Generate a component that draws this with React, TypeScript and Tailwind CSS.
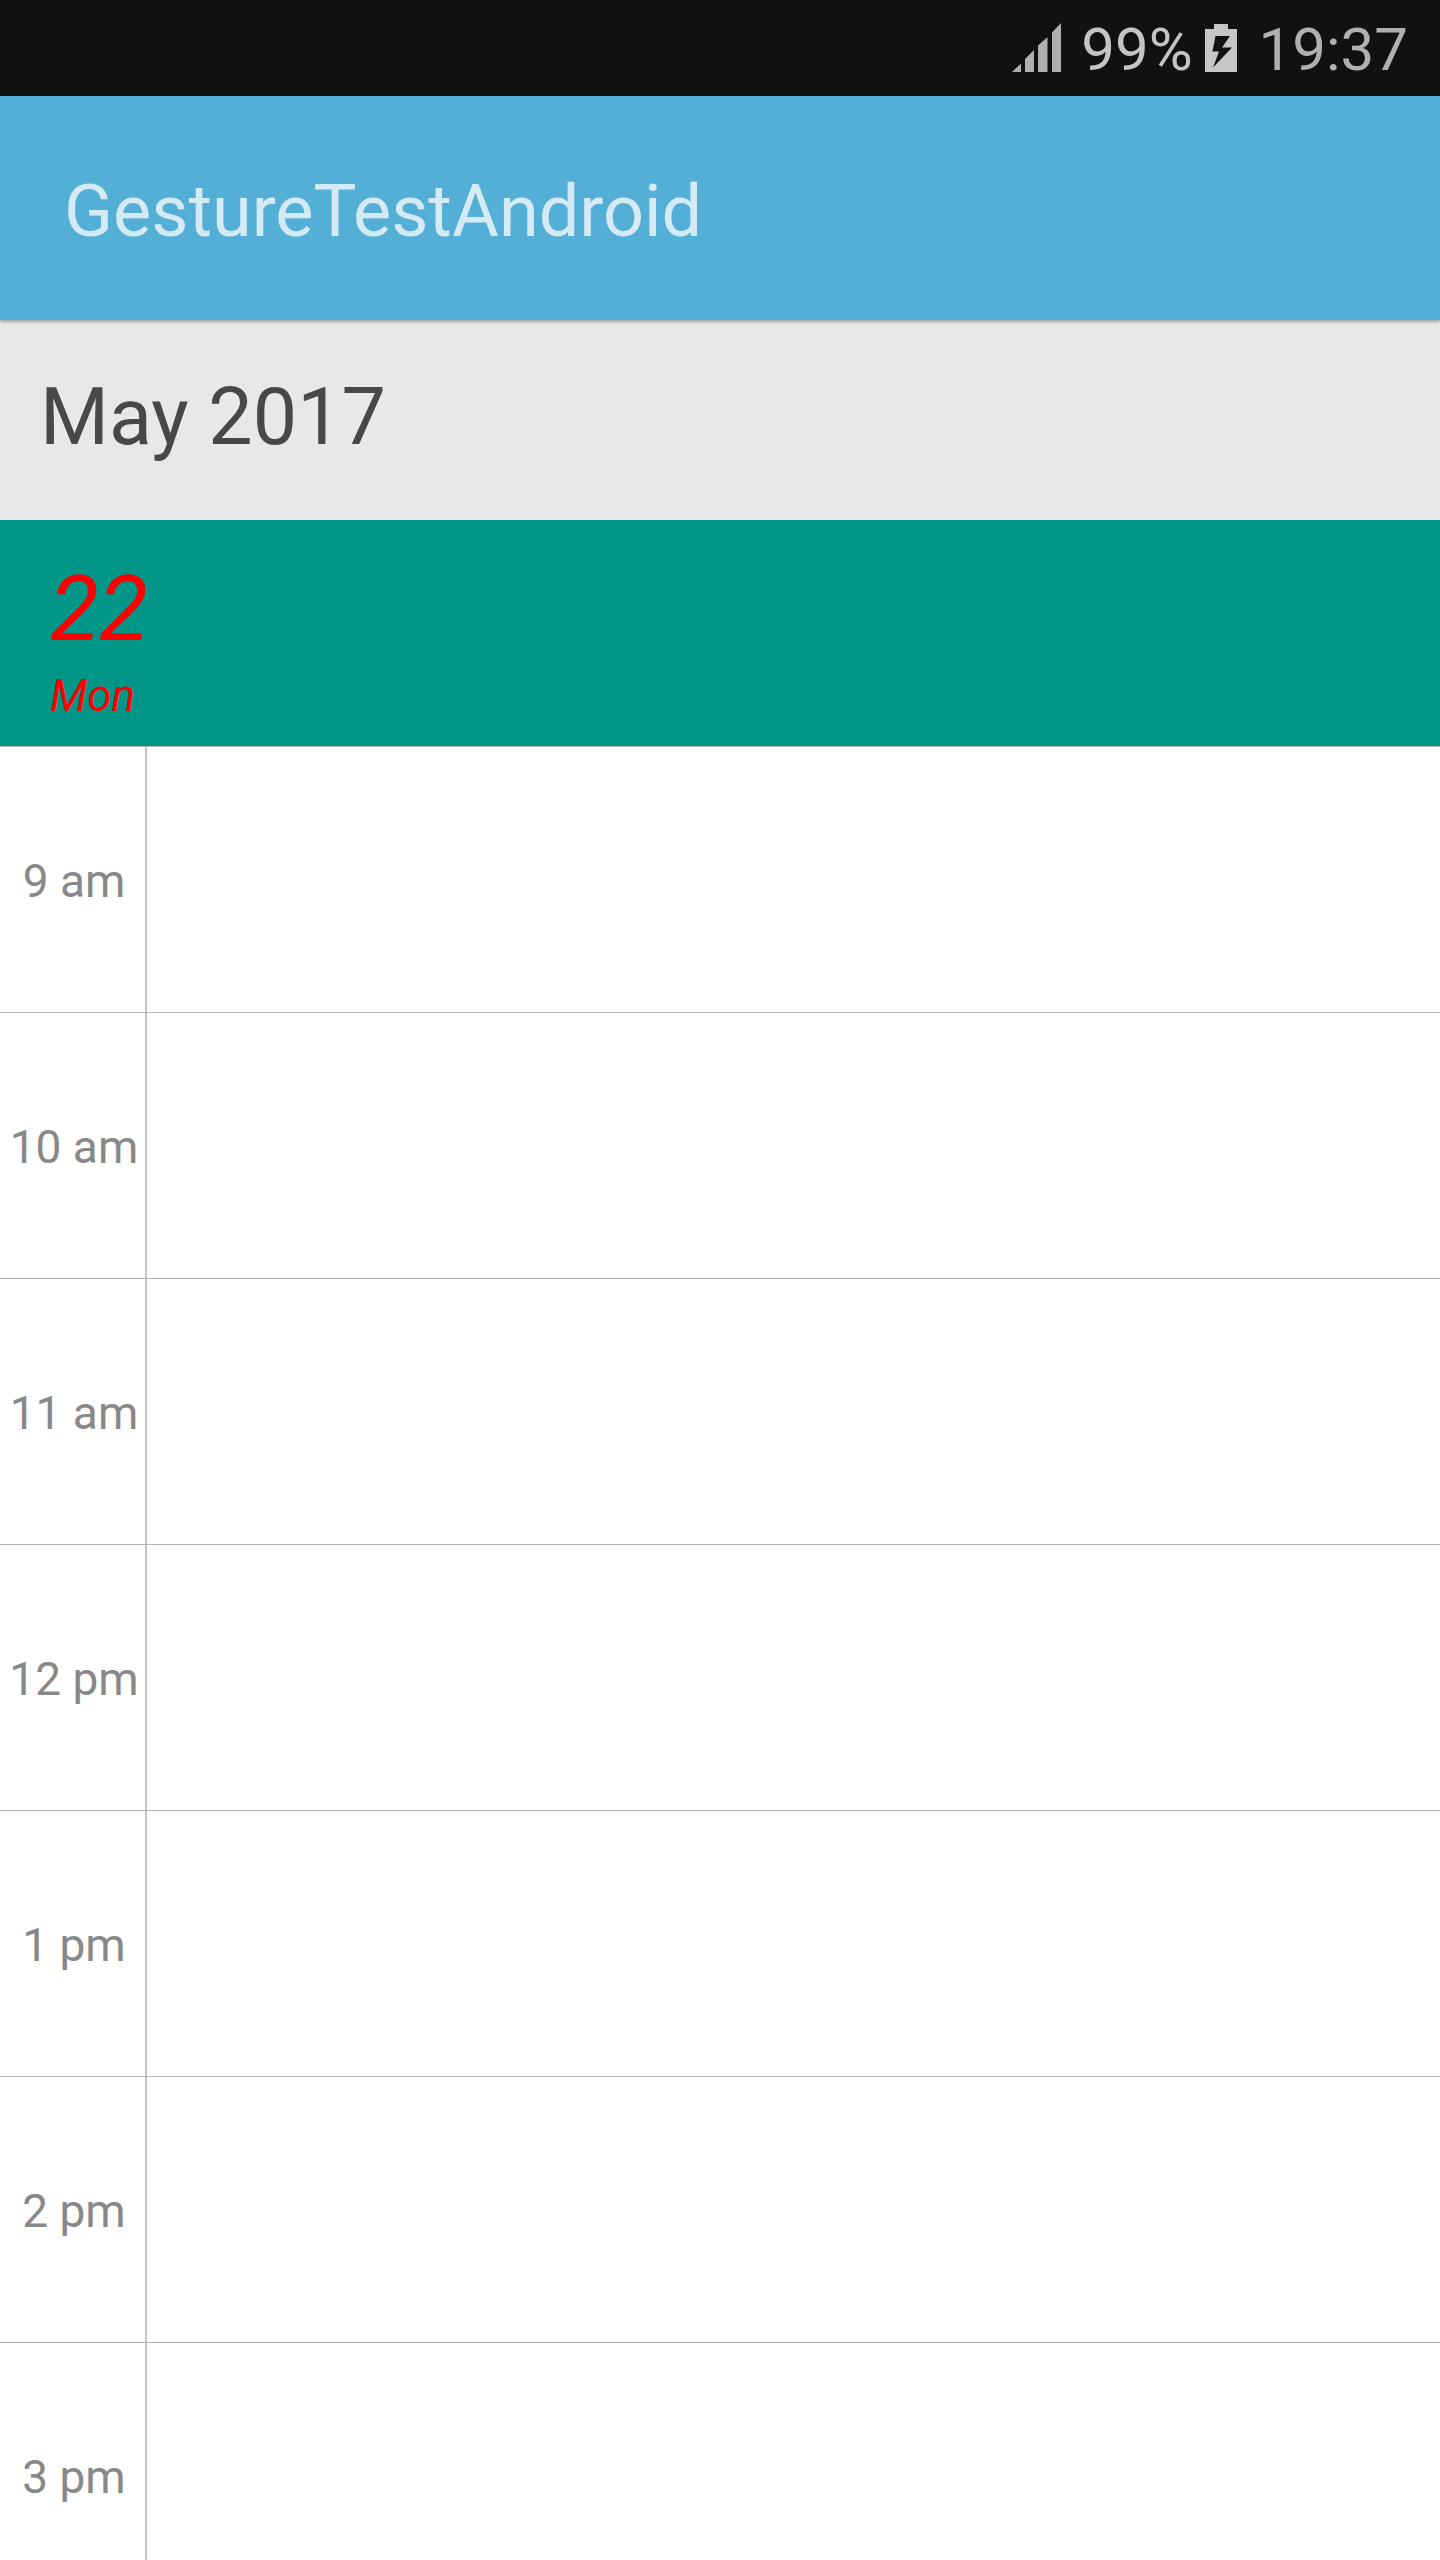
const hours = ["9 am", "10 am", "11 am", "12 pm", "1 pm", "2 pm", "3 pm"];

function SignalIcon() {
  return (
    <svg width="49" height="49" viewBox="0 0 49 49" fill="#b0b0b0" role="img" aria-label="Signal strength">
      <path d="M0 49L9 40.500V49zM13 49V36L22 27V49zM26 49V22.500L35.500 14V49zM40 49V9.500L49 0V49z" />
    </svg>
  );
}

function BatteryIcon() {
  return (
    <svg width="32" height="48" viewBox="0 0 32 48" fill="#c6c6c6" role="img" aria-label="Charging">
      <path fillRule="evenodd" d="M9 0H23V5H32V48H0V5H9zM10.500 12L7.500 27.500H14L8 43.500L27 23.500H17L25 12z" />
    </svg>
  );
}

export default function App() {
  return (
    <div className="flex h-screen w-full flex-col overflow-hidden bg-white font-['Roboto',sans-serif]">
      <div className="flex items-start justify-end bg-[#111111] pt-[15px] pr-8 pb-[11px] text-[60px] leading-[70px]">
        <div className="mt-2 mr-5">
          <SignalIcon />
        </div>
        <span className="mr-3 text-[#c4c4c4]">99%</span>
        <div className="mt-[9px] mr-[22px]">
          <BatteryIcon />
        </div>
        <time className="text-[#b0b0b0]">19:37</time>
      </div>

      <header className="relative z-10 bg-[#53afd5] px-16 pt-[74px] pb-[66px] text-[#d4eaf5] shadow-[0_1px_4px_rgba(0,0,0,0.45)]">
        <h1 className="text-[72px] leading-[84px]">GestureTestAndroid</h1>
      </header>

      <h2 className="bg-[#e8e8e8] px-10 pt-[50px] pb-14 text-[79px] leading-[94px] text-[#484848]">May 2017</h2>

      <div className="bg-[#009688] px-[50px] pt-[37px] pb-6 text-[#ff0000] italic">
        <div className="mb-[7px] text-[90px] leading-[106px]">22</div>
        <div className="text-[44px] leading-[52px]">Mon</div>
      </div>

      <div className="border-t border-[#b4b4b4]">
        {hours.map((hour) => (
          <div key={hour} className="flex h-[266px] border-b border-[#b4b4b4]">
            <div className="flex w-[147px] shrink-0 items-center justify-center border-r-2 border-[#c4c4c4] pt-[3px] pl-[3px] text-[46px] leading-[56px] text-[#888888]">
              {hour}
            </div>
          </div>
        ))}
      </div>
    </div>
  );
}
